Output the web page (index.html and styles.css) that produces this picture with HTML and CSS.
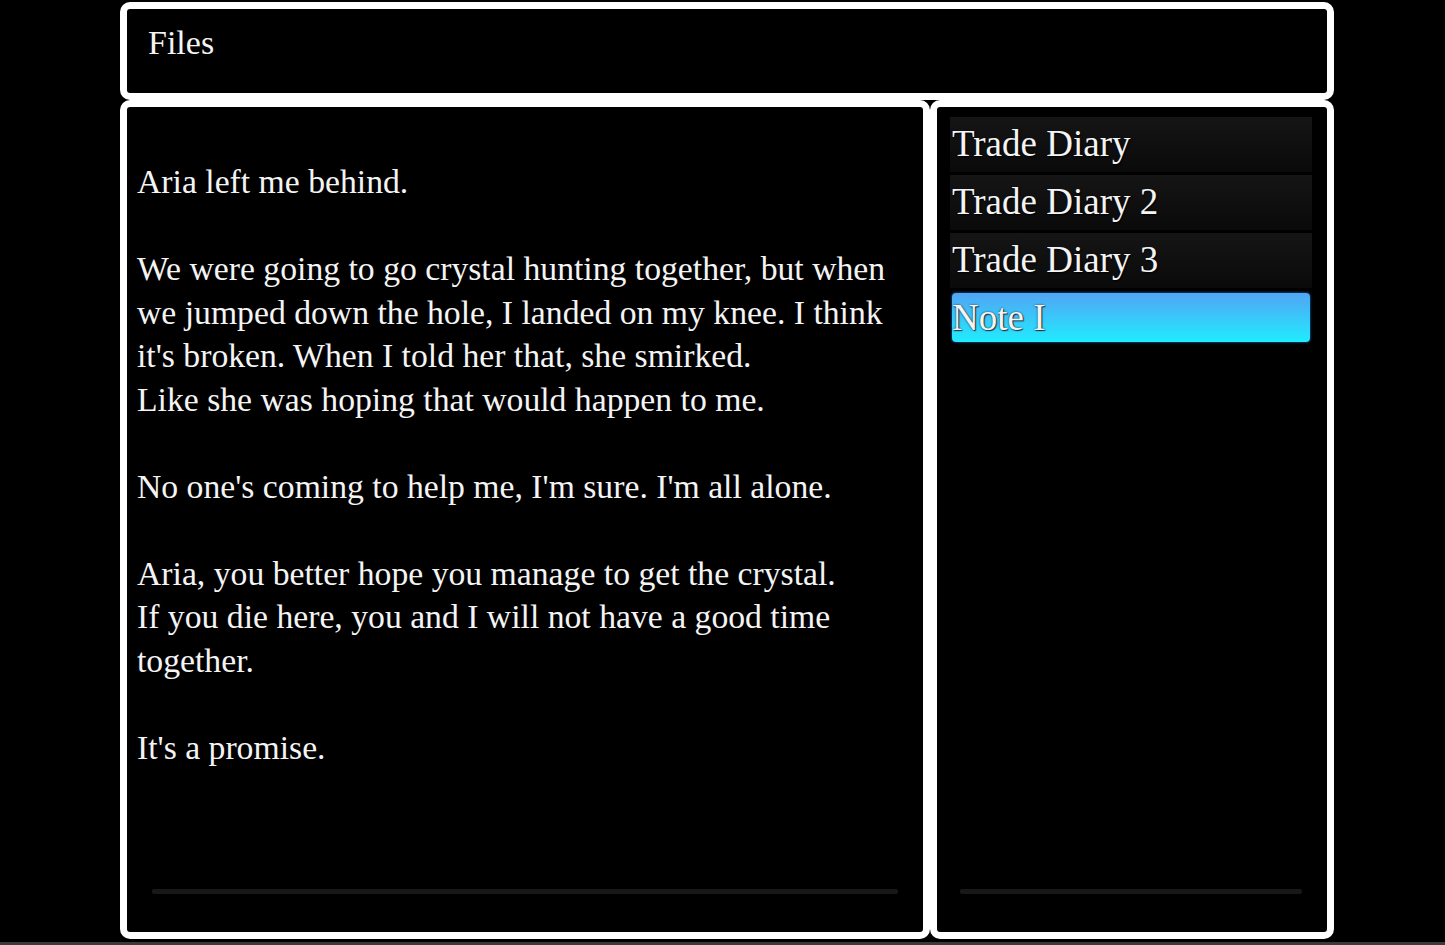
FILE: index.html
```html
<!DOCTYPE html>
<html lang="en">
<head>
<meta charset="utf-8">
<title>Files</title>
<link rel="stylesheet" href="styles.css">
</head>
<body>
<div class="window">
  <header class="panel title-panel">
    <h1 class="title">Files</h1>
  </header>
  <div class="columns">
    <section class="panel text-panel">
      <div class="note">
        <p>Aria left me behind.</p>
        <p>We were going to go crystal hunting together, but when<br>we jumped down the hole, I landed on my knee. I think<br>it's broken. When I told her that, she smirked.<br>Like she was hoping that would happen to me.</p>
        <p>No one's coming to help me, I'm sure. I'm all alone.</p>
        <p>Aria, you better hope you manage to get the crystal.<br>If you die here, you and I will not have a good time<br>together.</p>
        <p>It's a promise.</p>
      </div>
      <div class="track track-left"></div>
    </section>
    <section class="panel list-panel">
      <ul class="list">
        <li class="item">Trade Diary</li>
        <li class="item">Trade Diary 2</li>
        <li class="item">Trade Diary 3</li>
        <li class="item selected">Note I</li>
      </ul>
      <div class="track track-right"></div>
    </section>
  </div>
</div>
<div class="floor"></div>
</body>
</html>
```
FILE: styles.css
```css
html, body {
  margin: 0;
  padding: 0;
  background: #000;
  height: 945px;
  overflow: hidden;
}
body {
  font-family: "Liberation Serif", "DejaVu Serif", serif;
  color: #f4f4f4;
  position: relative;
}
.window {
  width: 1214px;
  margin-left: 120px;
  padding-top: 2px;
}
.panel {
  box-sizing: border-box;
  border: 7px solid #fff;
  border-radius: 10px;
  background: #000;
}
.title-panel {
  height: 98px;
  padding: 15px 0 0 21px;
}
.title {
  margin: 0;
  font-weight: normal;
  font-size: 34px;
  line-height: 38px;
  text-shadow: 1px 1px 2px #000;
}
.columns {
  display: flex;
  height: 839px;
}
.text-panel {
  width: 810px;
  height: 100%;
  display: flex;
  flex-direction: column;
  padding: 53px 10px 0 10px;
}
.note {
  flex: 1;
  font-size: 33.7px;
  line-height: 43.5px;
  white-space: nowrap;
  text-shadow: 1px 1px 2px #000;
}
.note p {
  margin: 0 0 43.5px 0;
}
.track {
  height: 5px;
  background: #181818;
  border-radius: 2px;
  margin-bottom: 38px;
}
.track-left {
  margin-left: 15px;
  margin-right: 15px;
}
.list-panel {
  width: 404px;
  height: 100%;
  display: flex;
  flex-direction: column;
  padding: 10px 15px 0 13px;
}
.list {
  flex: 1;
  list-style: none;
  margin: 0;
  padding: 0;
  display: flex;
  flex-direction: column;
  gap: 3px;
}
.item {
  height: 55px;
  line-height: 53px;
  padding-left: 2px;
  font-size: 37px;
  background: linear-gradient(#151515, #0a0a0a);
  text-shadow: 1px 1px 2px #000;
  white-space: nowrap;
}
.item.selected {
  margin: 2px 2px 0 2px;
  height: 49px;
  line-height: 49px;
  padding-left: 0;
  border-radius: 4px;
  background: linear-gradient(#52a4f4, #20ecff);
  box-shadow: 0 0 2px 1px #0b3a66;
  text-shadow: 1px 1px 1px #203040, 0 0 2px #203040;
}
.track-right {
  margin-left: 10px;
  margin-right: 10px;
}
.floor {
  position: absolute;
  left: 0;
  right: 0;
  bottom: 0;
  height: 3px;
  background: #3a3a3a;
}
```
